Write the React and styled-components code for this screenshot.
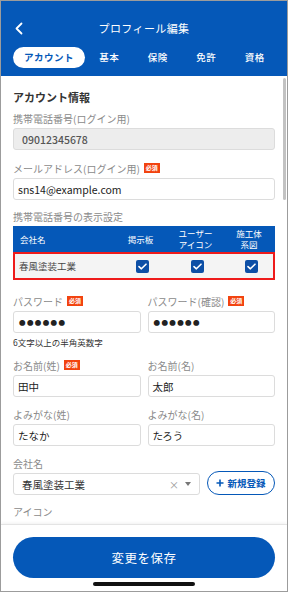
import React from 'react'
import styled, { createGlobalStyle } from 'styled-components'

const GlobalStyle = createGlobalStyle`
  * { box-sizing: border-box; }
  body {
    margin: 0;
    font-family: "Noto Sans CJK JP", "Noto Sans", sans-serif;
    background: #fff;
  }
`

const BLUE = '#0558b8'

const Phone = styled.div`
  width: 288px;
  height: 592px;
  border: 1px solid #9c9c9c;
  display: flex;
  flex-direction: column;
  overflow: hidden;
  background: #fff;
`

const Header = styled.header`
  background: ${BLUE};
  height: 75px;
  flex-shrink: 0;
  display: flex;
  flex-direction: column;
`

const TitleRow = styled.div`
  position: relative;
  height: 45px;
  display: flex;
  align-items: center;
  justify-content: center;
  padding-top: 9px;
`

const BackButton = styled.span`
  position: absolute;
  left: 13px;
  top: 21px;
  display: flex;
`

const Title = styled.h1`
  margin: 0;
  color: #fff;
  font-size: 11px;
  font-weight: 400;
  letter-spacing: 0.4px;
`

const Tabs = styled.nav`
  display: flex;
  align-items: center;
  padding: 0 8px 0 12px;
  height: 22px;
`

const Tab = styled.span`
  flex: ${p => (p.$active ? '0 0 72px' : '1')};
  height: 21px;
  border-radius: 11px;
  background: ${p => (p.$active ? '#fff' : 'transparent')};
  color: ${p => (p.$active ? BLUE : '#fff')};
  font-size: 9.5px;
  font-weight: ${p => (p.$active ? 700 : 500)};
  display: flex;
  align-items: center;
  justify-content: center;
  letter-spacing: 0.5px;
`

const Body = styled.main`
  position: relative;
  flex: 1;
  overflow: hidden;
  padding: 12px 12px 0;
`

const ScrollThumb = styled.div`
  position: absolute;
  right: 1px;
  top: 2px;
  width: 3px;
  height: 122px;
  border-radius: 2px;
  background: #c2c2c2;
`

const Heading = styled.h2`
  margin: 0 0 4px;
  font-size: 11px;
  line-height: 18px;
  font-weight: 700;
  color: #333;
`

const Field = styled.div`
  margin-top: ${p => p.$mt ?? 10}px;
`

const Label = styled.div`
  display: flex;
  align-items: center;
  gap: 4px;
  height: 16px;
  margin-bottom: 2px;
  font-size: 10px;
  color: #8a8a8a;
`

const Required = styled.span`
  background: #f2430f;
  color: #fff;
  font-size: 6px;
  line-height: 10px;
  padding: 0 2px;
  font-weight: 700;
`

const Input = styled.div`
  height: 22px;
  border: 1px solid #dcdcdc;
  border-radius: 3px;
  background: ${p => (p.$disabled ? '#ededed' : '#fff')};
  color: ${p => (p.$disabled ? '#555' : '#222')};
  font-size: ${p => (p.$dots ? '6.5px' : '10.5px')};
  font-weight: ${p => (p.$disabled ? 500 : 400)};
  display: flex;
  align-items: center;
  padding-left: ${p => (p.$disabled ? 8 : p.$dots ? 5 : 4)}px;
  letter-spacing: ${p => (p.$dots ? '1.4px' : 'normal')};
`

const Row2 = styled.div`
  display: grid;
  grid-template-columns: 1fr 1fr;
  column-gap: 7px;
`

const Table = styled.div`
  font-size: 9px;
`

const TableGrid = styled.div`
  display: grid;
  grid-template-columns: 100px 55px 55px 52px;
  align-items: center;
`

const TableHead = styled(TableGrid)`
  background: ${BLUE};
  color: #fff;
  height: 26px;
  line-height: 11px;
  text-align: center;
  font-size: 8.5px;
  & > span:first-child {
    text-align: left;
    padding-left: 7px;
  }
`

const TableRow = styled(TableGrid)`
  height: 28px;
  background: #f4f4f4;
  border: 2px solid #ee1b1b;
  color: #444;
  font-size: 9.5px;
  & > span { display: flex; justify-content: center; }
  & > span:first-child { justify-content: flex-start; padding-left: 4px; }
`

const Check = styled.span`
  width: 13px;
  height: 13px;
  border-radius: 2px;
  background: #0d4fa6;
  display: inline-flex;
  align-items: center;
  justify-content: center;
`

const Hint = styled.div`
  margin-top: 3px;
  font-size: 8.5px;
  line-height: 12px;
  color: #333;
`

const CompanyRow = styled.div`
  display: flex;
  align-items: center;
  gap: 7px;
`

const Select = styled(Input)`
  flex: 1;
  padding-left: 8px;
  padding-right: 8px;
  justify-content: space-between;
  color: #333;
`

const SelectIcons = styled.span`
  display: flex;
  align-items: center;
  gap: 6px;
  color: #999;
  font-size: 10px;
`

const Caret = styled.span`
  width: 0;
  height: 0;
  border-left: 3.5px solid transparent;
  border-right: 3.5px solid transparent;
  border-top: 4px solid #777;
`

const AddButton = styled.button`
  width: 68px;
  height: 24px;
  margin-top: -3px;
  border: 1px solid ${BLUE};
  border-radius: 12px;
  background: #fff;
  color: ${BLUE};
  font-family: inherit;
  font-size: 9.5px;
  font-weight: 700;
  display: flex;
  align-items: center;
  justify-content: center;
  gap: 3px;
  padding: 0;
`

const Footer = styled.footer`
  flex-shrink: 0;
  height: 67px;
  border-top: 1px solid #e4e4e4;
  box-shadow: 0 -1px 3px rgba(0, 0, 0, 0.06);
  display: flex;
  flex-direction: column;
  align-items: center;
  padding: 12px 12px 0;
`

const SaveButton = styled.button`
  width: 100%;
  height: 41px;
  border: none;
  border-radius: 21px;
  background: ${BLUE};
  color: #fff;
  font-family: inherit;
  font-size: 12.5px;
  font-weight: 400;
  letter-spacing: 0.5px;
`

const HomeBar = styled.div`
  margin-top: 4px;
  width: 102px;
  height: 4px;
  border-radius: 2px;
  background: #111;
`

const CheckBox = () => (
  <Check>
    <svg width="9" height="7" viewBox="0 0 9 7">
      <path d="M1 3.6 L3.4 5.8 L8 1.2" fill="none" stroke="#fff" strokeWidth="1.6" strokeLinecap="round" strokeLinejoin="round" />
    </svg>
  </Check>
)

const App = () => {
  return (
    <Phone>
      <GlobalStyle />
      <Header>
        <TitleRow>
          <BackButton>
            <svg width="10" height="13" viewBox="0 0 10 13">
              <path d="M7.5 1.5 L2.5 6.5 L7.5 11.5" fill="none" stroke="#fff" strokeWidth="1.8" strokeLinecap="round" strokeLinejoin="round" />
            </svg>
          </BackButton>
          <Title>プロフィール編集</Title>
        </TitleRow>
        <Tabs>
          <Tab $active>アカウント</Tab>
          <Tab>基本</Tab>
          <Tab>保険</Tab>
          <Tab>免許</Tab>
          <Tab>資格</Tab>
        </Tabs>
      </Header>

      <Body>
        <ScrollThumb />
        <Heading>アカウント情報</Heading>

        <Field $mt={0}>
          <Label>携帯電話番号(ログイン用)</Label>
          <Input $disabled>09012345678</Input>
        </Field>

        <Field>
          <Label>メールアドレス(ログイン用)<Required>必須</Required></Label>
          <Input>sns14@example.com</Input>
        </Field>

        <Field $mt={8}>
          <Label>携帯電話番号の表示設定</Label>
          <Table>
            <TableHead>
              <span>会社名</span>
              <span>掲示板</span>
              <span>ユーザー<br />アイコン</span>
              <span>施工体<br />系図</span>
            </TableHead>
            <TableRow>
              <span>春風塗装工業</span>
              <span><CheckBox /></span>
              <span><CheckBox /></span>
              <span><CheckBox /></span>
            </TableRow>
          </Table>
        </Field>

        <Field $mt={13}>
          <Row2>
            <div>
              <Label>パスワード<Required>必須</Required></Label>
              <Input $dots>●●●●●●</Input>
            </div>
            <div>
              <Label>パスワード(確認)<Required>必須</Required></Label>
              <Input $dots>●●●●●●</Input>
            </div>
          </Row2>
          <Hint>6文字以上の半角英数字</Hint>
        </Field>

        <Field $mt={9}>
          <Row2>
            <div>
              <Label>お名前(姓)<Required>必須</Required></Label>
              <Input>田中</Input>
            </div>
            <div>
              <Label>お名前(名)</Label>
              <Input>太郎</Input>
            </div>
          </Row2>
        </Field>

        <Field $mt={9}>
          <Row2>
            <div>
              <Label>よみがな(姓)</Label>
              <Input>たなか</Input>
            </div>
            <div>
              <Label>よみがな(名)</Label>
              <Input>たろう</Input>
            </div>
          </Row2>
        </Field>

        <Field $mt={9}>
          <Label>会社名</Label>
          <CompanyRow>
            <Select>
              春風塗装工業
              <SelectIcons>×<Caret /></SelectIcons>
            </Select>
            <AddButton>
              <svg width="8" height="8" viewBox="0 0 8 8">
                <path d="M4 0.5 V7.5 M0.5 4 H7.5" stroke={BLUE} strokeWidth="1.6" />
              </svg>
              新規登録
            </AddButton>
          </CompanyRow>
        </Field>

        <Field $mt={8}>
          <Label>アイコン</Label>
        </Field>
      </Body>

      <Footer>
        <SaveButton>変更を保存</SaveButton>
        <HomeBar />
      </Footer>
    </Phone>
  )
}

export default App
